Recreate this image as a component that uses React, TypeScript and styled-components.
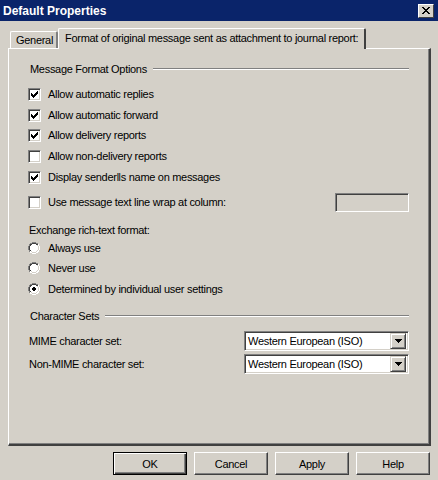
import React from "react";
import styled, { createGlobalStyle } from "styled-components";

const Global = createGlobalStyle`
  html, body { margin: 0; padding: 0; background: #d4d0c8; }
  body { font-family: "Liberation Sans", Arial, sans-serif; font-size: 11px; letter-spacing: -0.3px; color: #000; }
`;

const Window = styled.div`
  width: 438px;
  height: 480px;
  background: #d4d0c8;
  display: flex;
  flex-direction: column;
  overflow: hidden;
`;

const TitleBar = styled.div`
  height: 21px;
  background: #0a246a;
  display: flex;
  align-items: center;
  justify-content: space-between;
  padding: 0 4px 0 3px;
  box-sizing: border-box;
`;

const Title = styled.span`
  color: #fff;
  font-weight: bold;
  font-size: 12px;
  letter-spacing: 0;
`;

const CloseBtn = styled.div`
  width: 16px;
  height: 14px;
  box-sizing: border-box;
  background: #d4d0c8;
  border-top: 1px solid #fff;
  border-left: 1px solid #fff;
  border-right: 1px solid #404040;
  border-bottom: 1px solid #404040;
  display: flex;
  align-items: center;
  justify-content: center;
`;

const Body = styled.div`
  padding: 7px 7px 0 8px;
  display: flex;
  flex-direction: column;
`;

const TabStrip = styled.div`
  display: flex;
  align-items: flex-end;
  padding-left: 2px;
  height: 20px;
  position: relative;
  z-index: 1;
`;

const Tab = styled.div<{ $active?: boolean }>`
  box-sizing: border-box;
  height: ${(p) => (p.$active ? 21 : 17)}px;
  padding: ${(p) => (p.$active ? "2px 6px 0 6px" : "1px 3px 0 5px")};
  margin-bottom: ${(p) => (p.$active ? -1 : 0)}px;
  background: #d4d0c8;
  border-top: 1px solid #fff;
  border-left: 1px solid #fff;
  border-right: 2px solid ${(p) => (p.$active ? "#404040" : "#808080")};
  border-top-left-radius: 2px;
  border-top-right-radius: 2px;
  white-space: nowrap;
  line-height: 14px;
`;

const Panel = styled.div`
  box-sizing: border-box;
  width: 423px;
  height: 398px;
  border-top: 1px solid #fff;
  border-left: 1px solid #fff;
  border-right: 2px solid #404040;
  border-bottom: 2px solid #404040;
  box-shadow: inset -1px -1px 0 #808080;
  padding: 13px 0 0 19px;
  display: flex;
  flex-direction: column;
`;

const Row = styled.div<{ $h?: number; $mt?: number }>`
  height: ${(p) => p.$h ?? 14}px;
  margin-top: ${(p) => p.$mt ?? 0}px;
  display: flex;
  align-items: center;
  white-space: nowrap;
`;

const GroupHead = styled(Row)`
  padding-left: 2px;
  gap: 6px;
  padding-right: 20px;
`;

const EtchLine = styled.div`
  flex: 1;
  height: 0;
  border-top: 1px solid #808080;
  border-bottom: 1px solid #fff;
`;

const Box = styled.div`
  width: 13px;
  height: 13px;
  box-sizing: border-box;
  background: #fff;
  border-top: 1px solid #808080;
  border-left: 1px solid #808080;
  border-right: 1px solid #fff;
  border-bottom: 1px solid #fff;
  box-shadow: inset 1px 1px 0 #404040, inset -1px -1px 0 #d4d0c8;
  margin-right: 7px;
  flex: none;
  display: flex;
  align-items: center;
  justify-content: center;
`;

const Radio = styled.div`
  width: 12px;
  height: 12px;
  margin-right: 8px;
  flex: none;
`;

const Spacer = styled.div`
  flex: 1;
`;

const TextField = styled.div`
  width: 74px;
  height: 19px;
  box-sizing: border-box;
  margin-right: 20px;
  background: #d4d0c8;
  border-top: 1px solid #808080;
  border-left: 1px solid #808080;
  border-right: 1px solid #fff;
  border-bottom: 1px solid #fff;
  box-shadow: inset 1px 1px 0 #404040, inset -1px -1px 0 #d4d0c8;
`;

const Label = styled.span<{ $indent?: number }>`
  padding-left: ${(p) => p.$indent ?? 0}px;
`;

const Combo = styled.div`
  width: 165px;
  height: 20px;
  box-sizing: border-box;
  margin-right: 20px;
  background: #fff;
  border-top: 1px solid #808080;
  border-left: 1px solid #808080;
  border-right: 1px solid #fff;
  border-bottom: 1px solid #fff;
  box-shadow: inset 1px 1px 0 #404040, inset -1px -1px 0 #d4d0c8;
  display: flex;
  align-items: center;
  padding: 2px 2px 2px 3px;
`;

const ComboText = styled.span`
  flex: 1;
`;

const ComboBtn = styled.div`
  width: 16px;
  height: 16px;
  box-sizing: border-box;
  background: #d4d0c8;
  border-top: 1px solid #d4d0c8;
  border-left: 1px solid #d4d0c8;
  border-right: 1px solid #404040;
  border-bottom: 1px solid #404040;
  box-shadow: inset 1px 1px 0 #fff, inset -1px -1px 0 #808080;
  display: flex;
  align-items: center;
  justify-content: center;
`;

const ButtonRow = styled.div`
  display: flex;
  justify-content: flex-end;
  gap: 7px;
  padding: 6px 1px 0 0;
  width: 423px;
  box-sizing: border-box;
`;

const Button = styled.div<{ $default?: boolean }>`
  width: 74px;
  height: 23px;
  box-sizing: border-box;
  background: #d4d0c8;
  display: flex;
  align-items: center;
  justify-content: center;
  border: 1px solid;
  border-color: ${(p) => (p.$default ? "#000" : "#fff #404040 #404040 #fff")};
  box-shadow: ${(p) =>
    p.$default
      ? "inset 1px 1px 0 #fff, inset -1px -1px 0 #404040, inset -2px -2px 0 #808080"
      : "inset -1px -1px 0 #808080"};
`;

const Check = () => (
  <svg width="7" height="7" viewBox="0 0 7 7" shapeRendering="crispEdges">
    <path d="M6 0h1v3H6v1H5v1H4v1H3v1H2V6H1V5H0V2h1v1h1v1h1V3h1V2h1V1h1z" fill="#000" />
  </svg>
);

const RadioIcon = ({ on }: { on?: boolean }) => (
  <svg width="12" height="12" viewBox="0 0 12 12" shapeRendering="crispEdges">
    <path d="M4 0h4v1h2v1h1v2h1v4h-1v2h-1v1h-2v1H4v-1H2v-1H1V8H0V4h1V2h1V1h2z" fill="#fff" />
    <path d="M4 0h4v1H4zM2 1h2v1H2zM8 1h2v1H8zM1 2h1v2H1zM0 4h1v4H0zM1 8h1v2H1z" fill="#808080" />
    <path d="M4 1h4v1H4zM2 2h2v1H2zM8 2h2v1H8zM1 4h1v4H1zM2 3h1v1H2zM2 8h1v1H2z" fill="#404040" />
    <path d="M10 2h1v2h-1zM11 4h1v4h-1zM10 8h1v2h-1zM8 10h2v1H8zM4 11h4v1H4zM2 10h2v1H2z" fill="#fff" />
    <path d="M9 3h1v1H9zM10 4h1v4h-1zM9 8h1v1H9zM8 9h1v1H8zM4 10h4v1H4zM3 9h1v1H3z" fill="#d4d0c8" />
    {on && <path d="M5 4h2v1h1v2H7v1H5V7H4V5h1z" fill="#000" />}
  </svg>
);

const Arrow = () => (
  <svg width="7" height="4" viewBox="0 0 7 4" shapeRendering="crispEdges">
    <path d="M0 0h7v1H6v1H5v1H4v1H3V3H2V2H1V1H0z" fill="#000" />
  </svg>
);

const CloseX = () => (
  <svg width="8" height="7" viewBox="0 0 8 7" shapeRendering="crispEdges">
    <path d="M0 0h2v1h1v1h2V1h1V0h2v1H7v1H6v1H5v1h1v1h1v1h1v1H6V6H5V5H3v1H2v1H0V6h1V5h1V4h1V3H2V2H1V1H0z" fill="#000" />
  </svg>
);

const checks: [string, boolean, number][] = [
  ["Allow automatic replies", true, 11],
  ["Allow automatic forward", true, 7],
  ["Allow delivery reports", true, 6],
  ["Allow non-delivery reports", false, 7],
  ["Display senderǁs name on messages", true, 7],
];

const radios: [string, boolean, number][] = [
  ["Always use", false, 4],
  ["Never use", false, 6],
  ["Determined by individual user settings", true, 7],
];

export default function App() {
  return (
    <>
      <Global />
      <Window>
        <TitleBar>
          <Title>Default Properties</Title>
          <CloseBtn>
            <CloseX />
          </CloseBtn>
        </TitleBar>
        <Body>
          <TabStrip>
            <Tab>General</Tab>
            <Tab $active>Format of original message sent as attachment to journal report:</Tab>
          </TabStrip>
          <Panel>
            <GroupHead>
              <span>Message Format Options</span>
              <EtchLine />
            </GroupHead>
            {checks.map(([t, on, mt]) => (
              <Row key={t} $mt={mt}>
                <Box>{on && <Check />}</Box>
                <span>{t}</span>
              </Row>
            ))}
            <Row $h={20} $mt={8}>
              <Box />
              <span>Use message text line wrap at column:</span>
              <Spacer />
              <TextField />
            </Row>
            <Row $mt={11}>
              <Label $indent={1}>Exchange rich-text format:</Label>
            </Row>
            {radios.map(([t, on, mt]) => (
              <Row key={t} $mt={mt}>
                <Radio>
                  <RadioIcon on={on} />
                </Radio>
                <span>{t}</span>
              </Row>
            ))}
            <GroupHead $mt={13}>
              <span>Character Sets</span>
              <EtchLine />
            </GroupHead>
            <Row $h={20} $mt={8}>
              <Label $indent={1}>MIME character set:</Label>
              <Spacer />
              <Combo>
                <ComboText>Western European (ISO)</ComboText>
                <ComboBtn>
                  <Arrow />
                </ComboBtn>
              </Combo>
            </Row>
            <Row $h={20} $mt={3}>
              <Label $indent={1}>Non-MIME character set:</Label>
              <Spacer />
              <Combo>
                <ComboText>Western European (ISO)</ComboText>
                <ComboBtn>
                  <Arrow />
                </ComboBtn>
              </Combo>
            </Row>
          </Panel>
          <ButtonRow>
            <Button $default>OK</Button>
            <Button>Cancel</Button>
            <Button>Apply</Button>
            <Button>Help</Button>
          </ButtonRow>
        </Body>
      </Window>
    </>
  );
}
